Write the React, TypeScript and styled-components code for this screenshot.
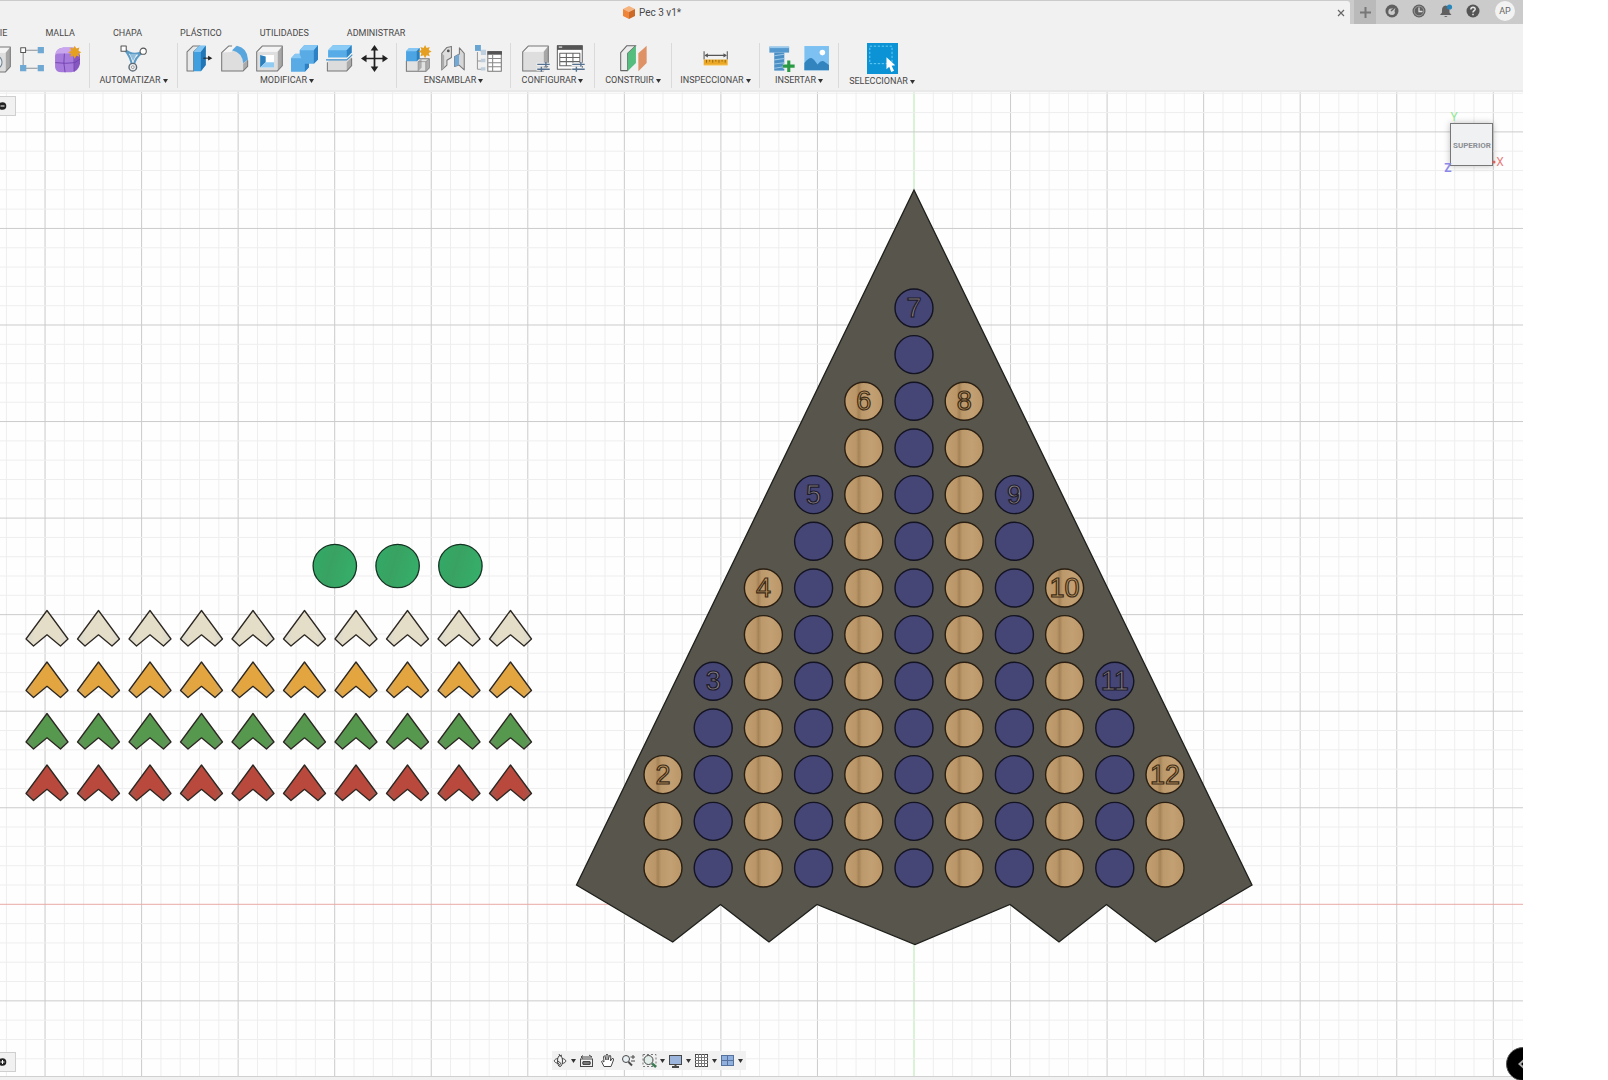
import React from "react";
import styled, { createGlobalStyle } from "styled-components";

const Global = createGlobalStyle`
  * { box-sizing: border-box; }
  html, body, #root { height: 100%; }
  body { margin: 0; background: #fff; font-family: Roboto, "Liberation Sans", sans-serif; color: #484848; overflow: hidden; }
  button { font: inherit; color: inherit; background: none; border: 0; padding: 0; margin: 0; cursor: pointer; }
  svg { display: block; }
`;

const Page = styled.div`
  min-height: 100vh;
  display: flex;
  padding-right: 85px;
`;
const Window = styled.div`
  position: relative;
  flex: 1;
  min-width: 0;
  display: flex;
  flex-direction: column;
  overflow: hidden;
  background: #f1f1f1;
`;
const TitleBar = styled.header`
  display: flex;
  height: 24px;
  background: #cbcbcb;
`;
const DocTab = styled.div`
  flex: 1;
  display: flex;
  align-items: center;
  margin: 1px 0 0 -48px;
  background: #f1f1f1;
  border-top-right-radius: 3px;
`;
const DocName = styled.h1`
  flex: 1;
  display: flex;
  align-items: center;
  justify-content: center;
  gap: 4px;
  margin: 0 0 0 20px;
  font-size: 10px;
  font-weight: 400;
  line-height: 14px;
`;
const CloseButton = styled.button`
  width: 18px;
  height: 20px;
  display: grid;
  place-items: center;
`;
const NewTab = styled.button`
  width: 22px;
  margin-left: 4px;
  display: grid;
  place-items: center;
  background: #bababa;
`;
const Account = styled.div`
  display: flex;
  align-items: center;
  gap: 13px;
  padding: 0 8px 2px 9px;
`;
const AccountButton = styled.button`
  width: 14px;
  height: 14px;
`;
const Avatar = styled.button`
  width: 20px;
  height: 20px;
  border-radius: 50%;
  background: #f2f2f2;
  color: #666;
  font-size: 9px;
  line-height: 20px;
  margin-left: 2px;
`;
const Tabs = styled.nav`
  display: flex;
  gap: 38px;
  height: 17px;
  margin-left: -6px;
`;
const Tab = styled.button`
  font-size: 9px;
  line-height: 19px;
`;
const Tools = styled.div`
  display: flex;
  height: 51px;
  padding: 2px 0;
  margin-left: -25px;
  border-bottom: 2px solid #e9e9e9;
`;
const Group = styled.section<{ $w: number }>`
  flex: 0 0 ${(p) => p.$w}px;
  display: flex;
  flex-direction: column;
  align-items: center;
  border-right: 1px solid #dadada;
  &:last-child { border-right: 0; }
`;
const IconRow = styled.div`
  display: flex;
  align-items: center;
  gap: 8px;
  height: 32px;
`;
const ToolButton = styled.button<{ $active?: boolean }>`
  width: ${(p) => (p.$active ? 31 : 27)}px;
  height: ${(p) => (p.$active ? 31 : 27)}px;
  background: ${(p) => (p.$active ? "#0b93d5" : "none")};
  & > svg { width: 100%; height: 100%; overflow: visible; }
`;
const GroupLabel = styled.button`
  display: flex;
  align-items: center;
  gap: 2px;
  font-size: 9px;
  line-height: 15px;
  white-space: nowrap;
`;
const Viewport = styled.main`
  position: relative;
  flex: 1;
  min-height: 0;
  overflow: hidden;
  background: #fefefe;
`;
const Scene = styled.svg`
  position: absolute;
  inset: 0;
  width: 100%;
  height: 100%;
`;
const Status = styled.footer`
  height: 4px;
  background: #f1f1f1;
  border-top: 1px solid #d0d0d0;
`;
const SidePanel = styled.button<{ $bottom?: boolean }>`
  position: absolute;
  left: 0;
  ${(p) => (p.$bottom ? "bottom: 4px;" : "top: 4px;")}
  width: 16px;
  height: 20px;
  display: flex;
  align-items: center;
  background: #f1f1f1;
  border: solid #cfcfcf;
  border-width: 1px 1px 1px 0;
`;
const NavBar = styled.div`
  position: absolute;
  left: 552px;
  bottom: 6px;
  height: 19px;
  padding-left: 1px;
  display: flex;
  align-items: center;
  background: #f1f1f1;
`;
const NavButton = styled.button<{ $menu?: boolean }>`
  display: flex;
  align-items: center;
  justify-content: space-between;
  width: ${(p) => (p.$menu ? 26 : 21)}px;
  padding-right: ${(p) => (p.$menu ? 3 : 0)}px;
`;
const Assistant = styled.button`
  position: absolute;
  right: -17px;
  bottom: -1px;
  width: 34px;
  height: 34px;
  border-radius: 50%;
  background: #000;
  border: 1px solid #555;
  display: flex;
  align-items: center;
  padding-left: 11px;
`;

const Caret = () => (
  <svg width="5" height="4" viewBox="0 0 5 4"><path d="M0 0H5L2.5 4Z" fill="#333" /></svg>
);

const Icon = ({ children }: { children: React.ReactNode }) => (
  <svg viewBox="0 0 78 78" fill="none" strokeWidth="3" strokeLinejoin="round">{children}</svg>
);

const starPoints = (cx: number, cy: number, r: number) =>
  Array.from({ length: 16 }, (_, i) => {
    const a = (i * Math.PI) / 8;
    const d = i % 2 ? r * 0.6 : r;
    return `${(cx + d * Math.cos(a)).toFixed(1)},${(cy + d * Math.sin(a)).toFixed(1)}`;
  }).join(" ");
const Star = ({ x, y }: { x: number; y: number }) => <polygon points={starPoints(x, y, 19)} fill="#e5a021" />;

const Sliders = () => (
  <g>
    <path d="M42 56H82M42 70H82" stroke="#f1f1f1" strokeWidth="9" />
    <path d="M44 56H80M44 70H80M69 49V63M56 63V77" stroke="#55718f" strokeWidth="4" />
  </g>
);

const SolidBox = () => (
  <g>
    <path d="M2 20L18 3H76L62 20Z" fill="#f4f4f4" />
    <path d="M62 20L76 3V60L62 75Z" fill="#a7a7a7" />
    <path d="M2 20H62V75H2Z" fill="#dedede" />
    <path d="M2 20L18 3H76V60L62 75H2Z" stroke="#777" />
  </g>
);

const icons: Record<string, React.ReactNode> = {
  hole: (
    <><SolidBox /><ellipse cx="40" cy="47" rx="12" ry="16" fill="#eee" stroke="#6d8295" /><ellipse cx="38" cy="48" rx="6" ry="10" fill="#69a7d6" /></>
  ),
  sketch: (
    <>
      <path d="M20 12H54M12 20V56M20 64H54" stroke="#8a9095" />
      <rect x="5" y="5" width="14" height="14" fill="#fff" stroke="#555" />
      <path d="M54 3h18v18H54zM54 55h18v18H54zM3 55h18v18H3z" fill="#6fa9d3" />
    </>
  ),
  form: (
    <>
      <path d="M3 28Q4 6 28 4H54Q74 8 75 28V50Q72 74 50 76H22Q4 76 3 60Z" fill="#a67bdc" />
      <path d="M3 28Q4 6 28 4H54Q66 6 60 18Q58 22 40 22H14Q4 22 3 28Z" fill="#c9a5ee" />
      <path d="M60 24Q75 20 75 32V50Q72 66 58 74Z" fill="#8557bf" />
      <path d="M4 48Q34 52 60 48L75 38M30 22Q26 50 32 76M58 22V74" stroke="#6f3fae" strokeWidth="2.5" />
      <Star x={60} y={18} />
    </>
  ),
  automate: (
    <>
      <path d="M14 12Q36 34 64 20M14 14Q32 36 34 58M64 22Q44 36 40 58" stroke="#5b9bc6" strokeWidth="6" />
      <path d="M28 26H48L38 46Z" fill="#8fbedd" />
      <rect x="3" y="3" width="15" height="15" fill="#fff" stroke="#555" />
      <circle cx="67" cy="18" r="9" fill="#fff" stroke="#555" />
      <circle cx="37" cy="64" r="11" fill="#eee" stroke="#5d6a75" strokeWidth="4" />
      <circle cx="37" cy="64" r="4" fill="#fff" stroke="#777" strokeWidth="2" />
    </>
  ),
  pressPull: (
    <>
      <path d="M3 20L20 3H40L22 20V75H3Z" fill="#e8e8e8" stroke="#777" />
      <path d="M22 20L38 2H57V58L43 76H22Z" fill="#3f9fdf" />
      <path d="M22 20L38 2H57L43 20Z" fill="#82c5f2" /><path d="M43 20L57 2V58L43 76Z" fill="#2376b5" />
      <path d="M50 38H68" stroke="#222" /><path d="M64 31L76 38L64 45Z" fill="#222" />
    </>
  ),
  fillet: (
    <>
      <path d="M2 22L22 3H42Q72 8 77 42V62L64 75H2Z" fill="#dedede" />
      <path d="M2 22L22 3H42L30 20Z" fill="#f6f6f6" />
      <path d="M32 15L46 2Q76 8 78 42L64 53Q62 22 32 15Z" fill="#58a6dd" />
      <path d="M64 54L77 43V62L64 75Z" fill="#aaa" />
      <path d="M32 3H22L2 22V75H64L77 62V44" stroke="#777" />
    </>
  ),
  shell: (
    <>
      <SolidBox />
      <rect x="12" y="29" width="40" height="36" fill="#fff" />
      <path d="M12 29L28 33V50L12 65Z" fill="#2b7fbd" /><path d="M12 65L28 50H52V65Z" fill="#8fcbf2" />
    </>
  ),
  combine: (
    <>
      <path d="M25 15L38 1H78V42L66 54H52V64L40 77H0V38L12 25H25Z" fill="#59abe6" />
      <path d="M25 15L38 1H78L66 15ZM0 38L12 26H25L30 38Z" fill="#87c8f5" />
      <path d="M66 15L78 1V42L66 54ZM40 54H52V64L40 77Z" fill="#2c82c4" />
    </>
  ),
  split: (
    <>
      <path d="M6 15L20 1H74V22L60 36H6Z" fill="#57ace8" /><path d="M6 15L20 1H74L60 15Z" fill="#8bccf7" /><path d="M60 15L74 1V22L60 36Z" fill="#2f83c2" />
      <path d="M4 50L10 42H60L74 30V60L60 75H4Z" fill="#dcdcdc" /><path d="M60 50L74 36V60L60 75Z" fill="#aaa" />
      <path d="M4 50V75H60L74 60V38" stroke="#777" /><path d="M0 43H60L76 28" stroke="#3c90cc" />
    </>
  ),
  move: (
    <>
      <path d="M39 10V68M10 39H68" stroke="#222" strokeWidth="5" />
      <path d="M39 0L50 16H28ZM39 78L50 62H28ZM0 39L16 28V50ZM78 39L62 28V50Z" fill="#222" />
    </>
  ),
  component: (
    <>
      <path d="M4 46L14 40H70V66L60 76H4Z" fill="#e2e2e2" stroke="#777" />
      <path d="M60 48L70 40V66L60 76ZM38 48L48 38V66L38 76Z" fill="#adadad" />
      <path d="M38 48V76M38 48H60L70 40M60 48V76" stroke="#888" strokeWidth="2" />
      <path d="M3 18L12 9H42V38L34 47H3Z" fill="#4ca4e3" /><path d="M3 18L12 9H42L34 18Z" fill="#85c7f4" /><path d="M34 18L42 9V38L34 47Z" fill="#2b7fbd" />
      <Star x={58} y={19} />
    </>
  ),
  joint: (
    <>
      <path d="M5 24L20 7L33 4V36L20 44V58L5 72Z" fill="#ddd" stroke="#777" /><path d="M5 24L12 30V66L5 72Z" fill="#aaa" />
      <path d="M42 34L56 26V8L70 24V72L55 58L42 62Z" fill="#d7d7d7" stroke="#777" /><path d="M42 34L55 26V58L42 62Z" fill="#73a9d5" />
      <circle cx="24" cy="17" r="4" fill="#555" />
    </>
  ),
  partsList: (
    <>
      <path d="M7 20V70M7 46H24M7 70H24M16 17H26" stroke="#999" />
      <path d="M0 0h17v17H0z" fill="#68a5d2" /><path d="M17 14h15v15H17zM17 40h13v10H17zM17 64h13v10H17z" fill="#bfcfdd" />
      <rect x="37" y="19" width="39" height="57" fill="#fff" stroke="#777" /><path d="M36 18H78V28H36Z" fill="#555" />
      <path d="M38 39H76M38 51H76M38 63H76M51 28V76" stroke="#888" />
    </>
  ),
  configure: <><SolidBox /><Sliders /></>,
  configTable: (
    <>
      <rect x="1" y="2" width="72" height="68" fill="#fff" stroke="#666" /><path d="M0 1H74V14H0Z" fill="#555" /><path d="M5 6H15" stroke="#fff" />
      <path d="M8 24H66V60H8ZM8 36H66M8 48H66M27 24V60M46 24V60" stroke="#666" />
      <Sliders />
    </>
  ),
  construct: (
    <>
      <path d="M2 22L20 2H46L22 24V74H2Z" fill="#ececec" stroke="#666" />
      <path d="M22 24L46 2V52L22 76Z" fill="#55bd7e" /><path d="M53 24L77 2V52L53 76Z" fill="#de9265" />
    </>
  ),
  measure: (
    <>
      <path d="M6 18V42M73 18V42M10 30H69" stroke="#555" /><path d="M7 30L17 24V36ZM72 30L62 24V36Z" fill="#555" />
      <path d="M5 42H74V58H5Z" fill="#eca824" /><path d="M5 57H74V60H5Z" fill="#f7d586" />
      <path d="M13 43V51M22 43V48M31 43V51M40 43V48M49 43V51M58 43V48M67 43V51" stroke="#6d5010" strokeWidth="2" />
    </>
  ),
  bolt: (
    <>
      <path d="M4 5H61V22H4Z" fill="#5599cf" /><path d="M4 4H61V9H4Z" fill="#9bcaed" /><path d="M18 22H47V74H18Z" fill="#4b8fc4" />
      <path d="M18 31L47 27M18 43L47 39M18 55L47 51M18 67L47 63" stroke="#99c6e7" />
      <path d="M60 45V78M43 61H77" stroke="#f1f1f1" strokeWidth="14" /><path d="M60 45V78M43 61H77" stroke="#2b9a45" strokeWidth="9" />
    </>
  ),
  picture: (
    <>
      <rect x="4" y="3" width="71" height="70" fill="#7cc1f2" /><circle cx="56" cy="22" r="8" fill="#fff" />
      <path d="M4 52Q18 34 26 38Q34 42 42 56Q54 40 64 50L75 58V73H4Z" fill="#3184bd" />
    </>
  ),
  select: (
    <>
      <rect x="7" y="8" width="56" height="44" stroke="#7fdcff" strokeDasharray="6 4" strokeWidth="2" />
      <path d="M49 36V66L56 60L61 73L68 70L62 57L71 56Z" fill="#fff" />
    </>
  ),
};

interface ToolGroup { label?: string; width: number; tools: [string, string][] }
const groups: ToolGroup[] = [
  { width: 115, tools: [["hole", "Agujero"], ["sketch", "Boceto"], ["form", "Crear forma"]] },
  { label: "AUTOMATIZAR", width: 88, tools: [["automate", "Automatizar"]] },
  { label: "MODIFICAR", width: 219, tools: [["pressPull", "Pulsar/tirar"], ["fillet", "Empalme"], ["shell", "Vaciado"], ["combine", "Combinar"], ["split", "Dividir cuerpo"], ["move", "Mover"]] },
  { label: "ENSAMBLAR", width: 114, tools: [["component", "Nuevo componente"], ["joint", "Unión"], ["partsList", "Lista de piezas"]] },
  { label: "CONFIGURAR", width: 84, tools: [["configure", "Configurar"], ["configTable", "Tabla de configuración"]] },
  { label: "CONSTRUIR", width: 77, tools: [["construct", "Plano"]] },
  { label: "INSPECCIONAR", width: 88, tools: [["measure", "Medir"]] },
  { label: "INSERTAR", width: 79, tools: [["bolt", "Insertar fijación"], ["picture", "Insertar imagen"]] },
  { label: "SELECCIONAR", width: 86, tools: [["select", "Seleccionar"]] },
];
const tabs = ["CIE", "MALLA", "CHAPA", "PLÁSTICO", "UTILIDADES", "ADMINISTRAR"];

/* Model geometry, in scene units */
const ORIGIN = { x: 914, y: 904.3 };
const MAJOR = 96.55;
const MINOR = MAJOR / 5;
const range = (n: number, from = 0) => Array.from({ length: n }, (_, i) => i + from);
const columns = range(11, -5);
const markerRows = ["beige", "orange", "green", "red"];

const Grid = () => (
  <g>
    {range(80, -48).map((i) => (
      <line key={`v${i}`} x1={ORIGIN.x + i * MINOR} x2={ORIGIN.x + i * MINOR} y1="91" y2="1080"
        stroke={i === 0 ? "#b4e8b0" : i % 5 ? "#eeeeee" : "#cbcbcb"} />
    ))}
    {range(52, -43).map((i) => (
      <line key={`h${i}`} y1={ORIGIN.y + i * MINOR} y2={ORIGIN.y + i * MINOR} x1="0" x2="1523"
        stroke={i === 0 ? "#e8aaa6" : i % 5 ? "#eeeeee" : "#cbcbcb"} />
    ))}
  </g>
);

const Board = () => (
  <g>
    <path d="M914 190L1252 885L1155.500 942L1106.500 904.500L1059 942L1010 904.500L915 944.500L817 904.500L769 942L720.500 904.500L672.700 942L576.500 885Z"
      fill="#57554c" stroke="#1f1f1b" strokeWidth="1.3" />
    {columns.map((k) => {
      const wood = Math.abs(k) % 2 === 1;
      const count = 13 - 2 * Math.abs(k);
      const x = ORIGIN.x + k * 50.2;
      return (
        <g key={k}>
          {range(count).map((r) => (
            <circle key={r} cx={x} cy={868 - r * 46.67} r="19" strokeWidth="1.4"
              fill={wood ? "url(#wood)" : "#454576"} stroke={wood ? "#2a1f12" : "#131322"} />
          ))}
          <text x={x} y={868 - (count - 1) * 46.67 + 9} textAnchor="middle" fontSize="27"
            fontFamily="Liberation Sans, sans-serif" fill={wood ? "#be9761" : "#8d8486"}
            stroke={wood ? "#3d2c17" : "#1d1b2b"} strokeWidth="1.2">{k + 7}</text>
        </g>
      );
    })}
  </g>
);

const Pieces = () => (
  <g>
    {range(3).map((i) => (
      <circle key={i} cx={334.8 + i * 62.8} cy="566" r="21.7" fill="url(#felt)" stroke="#143322" strokeWidth="1.3" />
    ))}
    {markerRows.map((c, r) =>
      range(10).map((i) => (
        <path key={`${c}${i}`} transform={`translate(${47 + i * 51.5} ${610.5 + r * 51.5})`}
          d="M0 0L21 28.500L13.500 35.500L0 24.300L-13.500 35.500L-21 28.500Z"
          fill={`url(#${c})`} stroke="#2c2722" strokeWidth="1.3" strokeLinejoin="round" />
      )),
    )}
  </g>
);

const ViewCube = () => (
  <g fontFamily="Roboto, sans-serif" textAnchor="middle">
    <rect x="1450.500" y="123.500" width="42" height="42" fill="#f0f1f3" stroke="#777" filter="url(#cubeShadow)" />
    <text x="1472" y="148" fontSize="8" fontWeight="700" fill="#8b8e92">SUPERIOR</text>
    <text x="1454" y="121" fontSize="12" fill="#93e694">Y</text>
    <text x="1448" y="172" fontSize="12" fontWeight="700" fill="#8d89ea">Z</text>
    <text x="1500" y="166" fontSize="12" fill="#e77d7d">X</text>
    <circle cx="1494" cy="162" r="1.500" fill="#e06060" />
  </g>
);

const Fade = ({ id, main, edge }: { id: string; main: string; edge: string }) => (
  <linearGradient id={id}>
    <stop offset="0" stopColor={edge} /><stop offset=".22" stopColor={main} />
    <stop offset=".78" stopColor={main} /><stop offset="1" stopColor={edge} />
  </linearGradient>
);

const Drawing = () => (
  <Scene viewBox="0 92 1523 984" preserveAspectRatio="xMinYMin slice" role="img" aria-label="Pec 3">
    <defs>
      <linearGradient id="wood">
        <stop offset="0" stopColor="#c3a071" /><stop offset=".3" stopColor="#b99567" />
        <stop offset=".37" stopColor="#a58358" /><stop offset=".45" stopColor="#bc996b" />
        <stop offset=".7" stopColor="#c3a073" /><stop offset="1" stopColor="#ba9667" />
      </linearGradient>
      <linearGradient id="felt" x2="1" y2=".3">
        <stop offset="0" stopColor="#31ab68" /><stop offset=".5" stopColor="#39a262" /><stop offset="1" stopColor="#36ad69" />
      </linearGradient>
      <Fade id="beige" main="#e4dec9" edge="#d9d7cc" />
      <Fade id="orange" main="#e3a53f" edge="#d1a86a" />
      <Fade id="green" main="#57984f" edge="#66905f" />
      <Fade id="red" main="#ba493d" edge="#a1584f" />
      <filter id="cubeShadow" x="-.3" y="-.3" width="1.6" height="1.6"><feDropShadow dx="0" dy="0" stdDeviation="3" floodOpacity=".25" /></filter>
    </defs>
    <Grid /><Board /><Pieces /><ViewCube />
  </Scene>
);

const NavIcon = ({ children }: { children: React.ReactNode }) => (
  <svg width="15" height="15" viewBox="0 0 15 15" fill="none" stroke="#484848">{children}</svg>
);
const navItems: { name: string; menu?: boolean; art: React.ReactNode }[] = [
  { name: "Orbitar", menu: true, art: <><ellipse cx="7" cy="8" rx="2.500" ry="5.500" /><path d="M5 5.500C0 6 0 10 6 10.500M9 5.500C14 6 14 10 9 10.500" /><path d="M5 8L8 10.500L5 13M6 1L7 3L9 2" /></> },
  { name: "Mirar a", art: <><rect x="1.500" y="6" width="12" height="7.500" /><path d="M4 8.500H11V11.500H4ZM2 4H13M4 2.500L2 4L4 5.500M10 2L13 4" /><path d="M4 9H11V11H4Z" fill="#aaa" /></> },
  { name: "Encuadre", art: <path d="M4 13.500L1.500 8.500Q2 7 4 9L3.500 3.500Q4 2 5 3.500L6 7V2Q7 .5 8 2V7L9.500 2.500Q11 2 10.800 4L10.500 8L12 5.500Q14 5 13.500 7L11 13.500Z" fill="#fff" /> },
  { name: "Zoom", art: <><circle cx="5" cy="6" r="3.500" fill="#e8f0f4" /><path d="M7.500 9L11 12.500" strokeWidth="2" /><path d="M9.500 4H14M12 2V6M10 8H14" /></> },
  { name: "Ajustar", menu: true, art: <><path d="M1 1.500H14V13.500H1Z" strokeDasharray="2 2" stroke="#777" /><circle cx="6.500" cy="7" r="4.500" fill="#e2eee9" /><path d="M10 10.500L14 14" stroke="#397c50" strokeWidth="2.500" /></> },
  { name: "Visualización", menu: true, art: <><rect x="1.500" y="2.500" width="12" height="9" fill="#9bb5dc" /><path d="M4 14H11M7.500 12V14" strokeWidth="2" /></> },
  { name: "Rejilla", menu: true, art: <><rect x="1.500" y="1.500" width="12" height="12" fill="#fff" /><path d="M4.500 1V14M7.500 1V14M10.500 1V14M1 4.500H14M1 7.500H14M1 10.500H14" stroke="#777" /></> },
  { name: "Ventanas", menu: true, art: <><rect x="1.500" y="2.500" width="12" height="10" fill="#8fb0de" stroke="#55719c" /><path d="M7.500 2V13M1 7.500H14" stroke="#55719c" /></> },
];

const PanelDot = ({ plus }: { plus?: boolean }) => (
  <svg width="7" height="8" viewBox="0 0 7 8"><circle cx="2.500" cy="4" r="3.800" fill="#222" /><path d={plus ? "M.5 4H4.500M2.500 2V6" : "M.5 4H4.500"} stroke="#fff" /></svg>
);

export default function App() {
  return (
    <Page>
      <Global />
      <Window>
        <TitleBar>
          <DocTab>
            <DocName>
              <svg width="12" height="13" viewBox="0 0 12 13"><path d="M0 3L6 0L12 3L6 6Z" fill="#f6b37d" /><path d="M0 3L6 6V13L0 10Z" fill="#ee8538" /><path d="M6 6L12 3V10L6 13Z" fill="#cd6a27" /></svg>
              Pec 3 v1*
            </DocName>
            <CloseButton aria-label="Cerrar"><svg width="8" height="8" viewBox="0 0 8 8"><path d="M1 1L7 7M7 1L1 7" stroke="#666" strokeWidth="1.200" /></svg></CloseButton>
          </DocTab>
          <NewTab aria-label="Nueva pestaña"><svg width="11" height="11" viewBox="0 0 11 11"><path d="M5.500 0V11M0 5.500H11" stroke="#777" strokeWidth="2" /></svg></NewTab>
          <Account>
            <AccountButton aria-label="Extensiones"><svg viewBox="0 0 14 14"><circle cx="7" cy="7" r="6.500" fill="#606060" /><path d="M3.500 9.500Q2.500 4 7 4.500L10.500 3.500L9.500 7Q11 10 7.500 11Q5 11 3.500 9.500Z" fill="#cbcbcb" /><path d="M6 7L11 2.500" stroke="#606060" strokeWidth="1.500" /></svg></AccountButton>
            <AccountButton aria-label="Estado del trabajo"><svg viewBox="0 0 14 14"><circle cx="7" cy="7" r="6.500" fill="#606060" /><circle cx="7" cy="7" r="4.800" fill="none" stroke="#aaa" strokeWidth=".8" /><path d="M7 3.500V7.500H10.500" fill="none" stroke="#ddd" strokeWidth="1.300" /></svg></AccountButton>
            <AccountButton aria-label="Notificaciones"><svg viewBox="0 0 14 14"><path d="M1 11L3 8.500V6Q3 2 6.500 1.500Q10 2 10.500 6V8.500L12.500 11ZM5 12H8.500Q7 14 5 12Z" fill="#606060" /><circle cx="10.500" cy="3" r="2.600" fill="#2587bd" /></svg></AccountButton>
            <AccountButton aria-label="Ayuda"><svg viewBox="0 0 14 14"><circle cx="7" cy="7" r="6.500" fill="#555" /><path d="M4.800 5.500Q5 3.300 7 3.300Q9.300 3.400 9.200 5.300Q9.100 6.300 7.800 7Q7 7.500 7 8.500M7 9.800V11.300" fill="none" stroke="#e5e5e5" strokeWidth="1.500" /></svg></AccountButton>
            <Avatar>AP</Avatar>
          </Account>
        </TitleBar>
        <Tabs>{tabs.map((t) => <Tab key={t}>{t}</Tab>)}</Tabs>
        <Tools>
          {groups.map((g) => (
            <Group key={g.width + (g.label ?? "")} $w={g.width}>
              <IconRow>
                {g.tools.map(([id, name]) => (
                  <ToolButton key={id} aria-label={name} $active={id === "select"}><Icon>{icons[id]}</Icon></ToolButton>
                ))}
              </IconRow>
              {g.label && <GroupLabel>{g.label}<Caret /></GroupLabel>}
            </Group>
          ))}
        </Tools>
        <Viewport>
          <Drawing />
          <SidePanel aria-label="Contraer navegador"><PanelDot /></SidePanel>
          <SidePanel $bottom aria-label="Mostrar comentarios"><PanelDot plus /></SidePanel>
          <NavBar>
            {navItems.map((n) => (
              <NavButton key={n.name} aria-label={n.name} $menu={n.menu}><NavIcon>{n.art}</NavIcon>{n.menu && <Caret />}</NavButton>
            ))}
          </NavBar>
        </Viewport>
        <Status />
        <Assistant aria-label="Abrir panel"><svg width="8" height="12" viewBox="0 0 8 12"><path d="M7 1L1.500 6L7 11" fill="none" stroke="#aaa" strokeWidth="2" /></svg></Assistant>
      </Window>
    </Page>
  );
}
